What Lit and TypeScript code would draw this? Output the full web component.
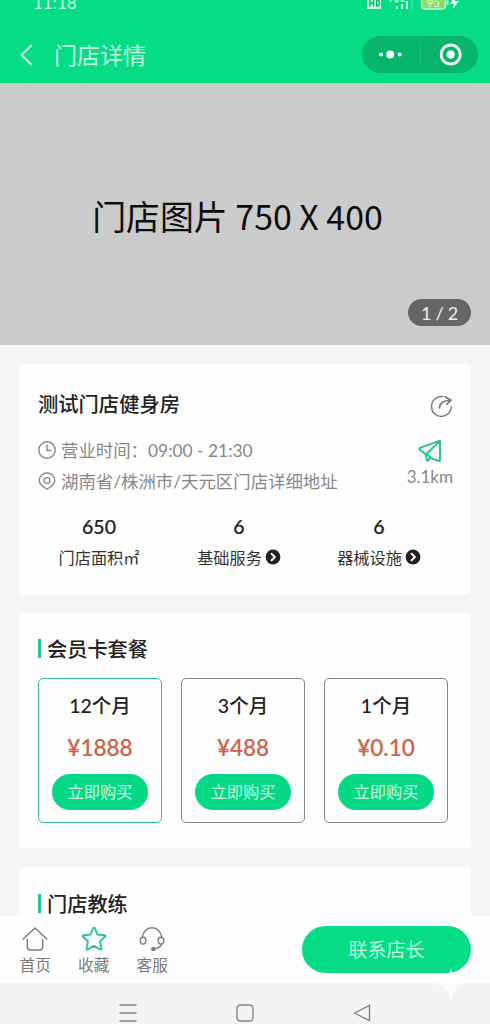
import { LitElement, html, css, svg } from "lit";
import { customElement, property } from "lit/decorators.js";

interface Plan {
  term: string;
  price: string;
  active?: boolean;
}

interface Stat {
  value: string;
  label: string;
  link?: boolean;
}

const PLANS: Plan[] = [
  { term: "12个月", price: "¥1888", active: true },
  { term: "3个月", price: "¥488" },
  { term: "1个月", price: "¥0.10" },
];

const STATS: Stat[] = [
  { value: "650", label: "门店面积㎡" },
  { value: "6", label: "基础服务", link: true },
  { value: "6", label: "器械设施", link: true },
];

const TABS = [
  {
    label: "首页",
    active: false,
    icon: svg`<path d="M1.200 13 13 2l11.800 11M5.300 13.500V21q0 3 3 3h9.400q3 0 3-3v-7.500" />`,
  },
  {
    label: "收藏",
    active: true,
    icon: svg`<path stroke-width="1.900" d="M13 1.800q.7 0 1 .7l2.500 6 6.800.7q1.800.3.600 1.600l-4.900 4.600 1.400 7q.1 1.700-1.400 1L13 19.900l-6 3.500q-1.500.7-1.400-1l1.400-7-4.900-4.600q-1.200-1.300.6-1.600l6.800-.7 2.500-6q.3-.7 1-.7Z" />`,
  },
  {
    label: "客服",
    active: false,
    icon: svg`<path d="M3.300 11.500C3.800 5.500 8 1.800 13 1.800s9.200 3.700 9.700 9.700M22.800 18c-1 2.800-3.500 4.200-7 4.800" />
      <ellipse cx="4" cy="14.700" rx="2.800" ry="3.400" />
      <ellipse cx="22" cy="14.700" rx="2.800" ry="3.400" />
      <circle cx="14.300" cy="23" r="1.500" fill="currentColor" />`,
  },
];

@customElement("plan-card")
export class PlanCard extends LitElement {
  @property() term = "";
  @property() price = "";
  @property({ type: Boolean, reflect: true }) active = false;

  static styles = css`
    :host {
      box-sizing: border-box;
      display: flex;
      flex-direction: column;
      align-items: center;
      width: 124px;
      height: 145px;
      padding-top: 12px;
      border: 1.500px solid #858585;
      border-radius: 5px;
      color: #222;
    }
    :host([active]) {
      border-color: #3fbf94;
    }
    .term {
      font-size: 19.500px;
      font-weight: 500;
      line-height: 30px;
    }
    .price {
      margin-top: 11px;
      font-size: 22.500px;
      font-weight: 500;
      line-height: 32px;
      color: #ce6248;
      -webkit-text-stroke: 0.200px #ce6248;
    }
    .buy {
      width: 96px;
      height: 36px;
      margin-top: 10px;
      padding: 0;
      border: 0;
      border-radius: 18px;
      background: #06d986;
      color: #c9f8e3;
      font: inherit;
      font-size: 16.300px;
      line-height: 36px;
    }
  `;

  render() {
    return html`
      <div class="term">${this.term}</div>
      <div class="price">${this.price}</div>
      <button class="buy">立即购买</button>
    `;
  }
}

@customElement("app-root")
export class AppRoot extends LitElement {
  static styles = css`
    :host {
      position: relative;
      display: flex;
      flex-direction: column;
      width: 490px;
      height: 1024px;
      overflow: hidden;
      background: #f5f5f5;
      color: #222;
      font-family: Lato, "Noto Sans CJK SC", sans-serif;
    }
    svg {
      display: block;
      flex: none;
      fill: none;
      stroke: currentColor;
      stroke-width: 1.400;
      stroke-linecap: round;
      stroke-linejoin: round;
    }
    .head {
      flex: none;
      height: 83px;
      background: #05dc85;
      color: #c4f9e2;
    }
    .status {
      display: flex;
      justify-content: space-between;
      height: 10px;
      padding: 0 28px 0 33px;
      overflow: hidden;
    }
    .time {
      margin-top: -7px;
      font-size: 17px;
      line-height: 20px;
    }
    .bar {
      display: flex;
      align-items: center;
      height: 37px;
      margin-top: 26px;
      padding: 0 12px 0 20px;
    }
    .page-title {
      flex: 1;
      margin-left: 21px;
      font-size: 23px;
      line-height: 36px;
    }
    .capsule {
      display: flex;
      align-items: center;
      width: 116px;
      height: 37px;
      border-radius: 19px;
      background: #06b46c;
      color: #effff8;
    }
    .hero {
      display: grid;
      flex: none;
      box-sizing: border-box;
      height: 262px;
      padding-top: 4px;
      place-items: center;
      position: relative;
      background: #cbcbcb;
      color: #0c0c0c;
      font-family: "Noto Sans CJK SC", sans-serif;
      font-size: 33.900px;
      line-height: 50px;
    }
    .hero-text {
      margin-right: 15px;
      white-space: nowrap;
    }
    .count {
      position: absolute;
      right: 19px;
      bottom: 19px;
      width: 63px;
      height: 27px;
      border-radius: 14px;
      background: #666;
      color: #ededed;
      font-family: Lato, sans-serif;
      font-size: 18px;
      line-height: 28px;
      word-spacing: -0.500px;
      text-align: center;
    }
    .content {
      display: flex;
      flex: 1;
      flex-direction: column;
      gap: 19px;
      min-height: 0;
      padding: 19px 19px 0;
      overflow: hidden;
    }
    .card {
      box-sizing: border-box;
      flex: none;
      border-radius: 4px;
      background: #fefefe;
    }
    .info {
      height: 230px;
      padding-top: 25px;
    }
    .row {
      display: flex;
      justify-content: space-between;
      padding: 0 18px 0 19px;
    }
    .name {
      font-size: 20.300px;
      font-weight: 500;
      line-height: 30px;
    }
    .share {
      margin-top: 6px;
      color: #777;
    }
    .detail {
      margin-top: 15px;
      color: #888;
      font-size: 17.400px;
    }
    .line {
      display: flex;
      align-items: center;
      gap: 5px;
      height: 31px;
      white-space: nowrap;
    }
    .distance {
      display: flex;
      flex-direction: column;
      align-items: center;
      padding-top: 5px;
      font-size: 17px;
      line-height: 24px;
    }
    .plane {
      margin-bottom: 2px;
      color: #22c68a;
    }
    .stats {
      display: grid;
      grid-template-columns: repeat(3, 140px);
      margin: 16px 0 0 10px;
      text-align: center;
    }
    .value {
      font-size: 19.500px;
      font-weight: 500;
      line-height: 30px;
      -webkit-text-stroke: 0.200px #222;
    }
    .label {
      display: flex;
      align-items: center;
      justify-content: center;
      gap: 3px;
      height: 30px;
      font-size: 16.200px;
      color: #333;
    }
    .plans {
      height: 235px;
      padding: 20px 19px 0;
    }
    .coach {
      height: 90px;
      padding: 21px 19px 0;
    }
    .heading {
      display: flex;
      align-items: center;
      gap: 6px;
      height: 30px;
      font-size: 20.200px;
      font-weight: 500;
    }
    .heading::before {
      width: 3px;
      height: 19px;
      background: #23c98b;
      content: "";
    }
    .plan-list {
      display: flex;
      gap: 19px;
      margin-top: 15px;
    }
    .tabs {
      display: flex;
      flex: none;
      box-sizing: border-box;
      height: 67px;
      padding: 10px 19px 0 6px;
      background: #fefefe;
    }
    .tab {
      display: flex;
      flex-direction: column;
      align-items: center;
      gap: 1px;
      width: 58.500px;
      color: #7b7b7b;
      font-size: 15.700px;
      line-height: 24px;
    }
    .tab.active svg {
      color: #2bc691;
    }
    .contact {
      width: 169px;
      height: 47px;
      margin-left: auto;
      padding: 0;
      border: 0;
      border-radius: 24px;
      background: #05dc85;
      color: #c4f9e2;
      font: inherit;
      font-size: 19px;
      line-height: 47px;
    }
    .system {
      display: flex;
      flex: none;
      align-items: center;
      justify-content: space-between;
      box-sizing: border-box;
      height: 41px;
      padding: 19px 119px 0 119px;
      background: #f4f4f4;
      color: #858585;
    }
    .spark {
      position: absolute;
      left: 435px;
      top: 967px;
    }
  `;

  private chevron() {
    return html`<svg width="16" height="16" viewBox="0 0 16 16">
      <circle cx="8" cy="8" r="7.400" fill="#222" stroke="none" />
      <path d="m6.600 4.800 3.300 3.200-3.300 3.200" stroke="#fff" stroke-width="2" />
    </svg>`;
  }

  render() {
    return html`
      <header class="head">
        <div class="status">
          <span class="time">11:18</span>
          <svg width="96" height="10" viewBox="366 0 96 10">
            <path d="M367-4h14V9h-14z" fill="#c4f9e2" stroke="none" />
            <path d="M370 0v6M373.500 0v6M370 3h3.500M376.500 0v6q3 0 3-3t-3-3" stroke="#05b870" />
            <path d="M397 6v3M402 4v5M407 1v8" stroke-width="2" stroke-linecap="butt" />
            <path d="M390 1h1M395 0l1.500 2 2-2M401 1h3" />
            <path d="M412 0v9" stroke="#5ce9ae" stroke-width="1" />
            <rect x="421.500" y="-5" width="24" height="14" rx="3" fill="#8ddb69" stroke="#c4f9e2" />
            <text x="427" y="7" fill="#e5ffe3" stroke="none" font-size="11">95</text>
            <path d="M447.500 1v3" stroke-width="2" />
            <path d="m454-3-4 7h4l-1 5 6-8h-4z" fill="#effff8" stroke="none" />
          </svg>
        </div>
        <div class="bar">
          <svg width="13" height="22" viewBox="0 0 13 22">
            <path d="M11.300 1.500 1.500 11l9.800 9.500" stroke-width="2" />
          </svg>
          <div class="page-title">门店详情</div>
          <div class="capsule">
            <svg width="116" height="37" viewBox="0 0 116 37">
              <g fill="currentColor" stroke="none">
                <circle cx="19" cy="18.500" r="2.100" />
                <circle cx="28.200" cy="18.500" r="4" />
                <circle cx="37.700" cy="18.500" r="2.100" />
                <circle cx="88.700" cy="18.500" r="4.200" />
              </g>
              <path d="M58.500 7v23" stroke="#20bd7b" stroke-width="1" />
              <circle cx="88.700" cy="18.500" r="9.500" stroke-width="2.800" />
            </svg>
          </div>
        </div>
      </header>

      <section class="hero">
        <div class="hero-text">门店图片 750 X 400</div>
        <div class="count">1 / 2</div>
      </section>

      <main class="content">
        <section class="card info">
          <div class="row">
            <div class="name">测试门店健身房</div>
            <svg class="share" width="23" height="23" viewBox="0 0 23 23">
              <path d="M12.800 1.600C6.500.6 1.500 5.500 1.500 11.500s4.500 10 10 10 9.800-4.500 9.800-9.600" />
              <path d="M9.500 13c0-5 3-7.500 11-7.800M15 1.800l6 3.400-4.200 4" stroke-width="1.600" />
            </svg>
          </div>
          <div class="row detail">
            <div>
              <div class="line">
                <svg width="18" height="18" viewBox="0 0 18 18">
                  <circle cx="9" cy="9" r="8.200" />
                  <path d="M9 4v5.500h4" />
                </svg>
                <span>营业时间：09:00 - 21:30</span>
              </div>
              <div class="line">
                <svg width="18" height="18" viewBox="0 0 18 18">
                  <path d="M9 17.200c-2.700-2-7.700-4-7.700-8.800A7.600 7.600 0 0 1 9 1a7.600 7.600 0 0 1 7.700 7.400c0 4.800-5 6.800-7.700 8.800Z" />
                  <circle cx="9" cy="8.500" r="2.900" />
                </svg>
                <span>湖南省/株洲市/天元区门店详细地址</span>
              </div>
            </div>
            <div class="distance">
              <svg class="plane" width="24" height="24" viewBox="0 0 24 24">
                <path
                  d="M22 1.700 2 8.800q-1.500.8-.2 2l6 4.700 1.400 6.500 3.300-3.200 8 3.200q1.500.2 1.500-1.200ZM21.500 2.500 8 15.300M12.500 18.500 9.300 15"
                  stroke-width="1.900"
                />
              </svg>
              <span>3.1km</span>
            </div>
          </div>
          <div class="stats">
            ${STATS.map(
              (s) => html`<div>
                <div class="value">${s.value}</div>
                <div class="label"><span>${s.label}</span>${s.link ? this.chevron() : ""}</div>
              </div>`
            )}
          </div>
        </section>

        <section class="card plans">
          <div class="heading">会员卡套餐</div>
          <div class="plan-list">
            ${PLANS.map(
              (p) => html`<plan-card .term=${p.term} .price=${p.price} ?active=${p.active}></plan-card>`
            )}
          </div>
        </section>

        <section class="card coach">
          <div class="heading">门店教练</div>
        </section>
      </main>

      <nav class="tabs">
        ${TABS.map(
          (t) => html`<div class="tab ${t.active ? "active" : ""}">
            <svg width="26" height="26" viewBox="0 0 26 26">${t.icon}</svg>
            <span>${t.label}</span>
          </div>`
        )}
        <button class="contact">联系店长</button>
      </nav>

      <footer class="system">
        <svg width="18" height="18" viewBox="0 0 18 18">
          <path d="M1 1h16M1 9h16M1 17h16" />
        </svg>
        <svg width="18" height="18" viewBox="0 0 18 18">
          <rect x="1" y="1" width="16" height="16" rx="3.500" />
        </svg>
        <svg width="18" height="18" viewBox="0 0 18 18">
          <path d="M16.500 1.300v15.400L1.500 9Z" />
        </svg>
      </footer>

      <svg class="spark" width="32" height="34" viewBox="0 0 32 34">
        <path
          d="M16 0q2 15 16 17-14 2-16 17-2-15-16-17Q14 15 16 0Z"
          fill="#fff"
          fill-opacity="0.750"
          stroke="none"
        />
      </svg>
    `;
  }
}
